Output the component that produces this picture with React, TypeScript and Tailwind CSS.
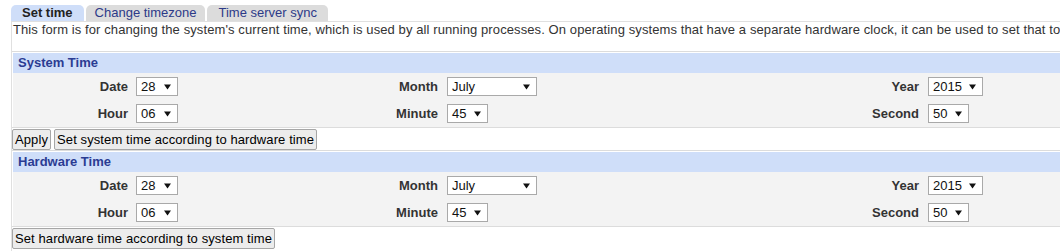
import React from "react";

const Arrow = () => (
  <svg width="7" height="6" viewBox="0 0 7 6" className="shrink-0">
    <path d="M0 0.5 L7 0.5 L3.5 5.5 Z" fill="#111" />
  </svg>
);

const Sel = ({ value, w }: { value: string; w: string }) => (
  <div
    className={`ml-[4px] flex h-[19px] items-center justify-between border border-[#a9a9a9] bg-white pl-[4px] pr-[6px] text-[13px] leading-[17px] text-[#111] ${w}`}
  >
    <span>{value}</span>
    <Arrow />
  </div>
);

const Label = ({ text, pr }: { text: string; pr: string }) => (
  <div className={`flex h-[19px] items-center justify-end text-[13px] font-bold text-[#333] ${pr}`}>{text}</div>
);

const Btn = ({ children }: { children: React.ReactNode }) => (
  <button className="h-[21px] rounded-[2px] border border-[#a6a6a6] bg-[#ececec] px-[2px] text-[13px] leading-[19px] tracking-[0.1px] text-black">
    {children}
  </button>
);

const Section = ({ title }: { title: string }) => (
  <div className="border-b border-t border-[#dcdcdc] pl-px pt-px">
    <div className="h-[20px] bg-[#cfdef9] pl-[5px] text-[13px] font-bold leading-[20px] text-[#2b3c93]">{title}</div>
    <div className="grid h-[54px] grid-cols-[119px_254px_57px_424px_57px_200px] content-start gap-y-[8px] bg-[#f3f3f3] pt-[4px]">
      <Label text="Date" pr="pr-[4px]" />
      <div className="flex"><Sel value="28" w="w-[42px]" /></div>
      <Label text="Month" pr="pr-[5px]" />
      <div className="flex"><Sel value="July" w="w-[90px]" /></div>
      <Label text="Year" pr="pr-[5px]" />
      <div className="flex"><Sel value="2015" w="w-[55px]" /></div>
      <Label text="Hour" pr="pr-[4px]" />
      <div className="flex"><Sel value="06" w="w-[42px]" /></div>
      <Label text="Minute" pr="pr-[5px]" />
      <div className="flex"><Sel value="45" w="w-[41px]" /></div>
      <Label text="Second" pr="pr-[5px]" />
      <div className="flex"><Sel value="50" w="w-[41px]" /></div>
    </div>
  </div>
);

export default function App() {
  return (
    <div
      className="h-[251px] w-[1060px] overflow-hidden bg-white text-[13px] text-[#333]"
      style={{ fontFamily: '"Liberation Sans", Arial, sans-serif' }}
    >
      <div className="w-[1300px]">
        <div className="flex gap-[2px] pl-[11px] pt-[5px]">
          <div className="h-[16px] rounded-t-[5px] bg-[#cfdef9] px-[11px] text-[13px] font-bold leading-[16px] text-[#222]">Set time</div>
          <div className="h-[16px] rounded-t-[5px] bg-[#dcdcdc] px-[9px] text-[13px] leading-[16px] text-[#2c3a88]">Change timezone</div>
          <div className="h-[16px] rounded-t-[5px] bg-[#dcdcdc] px-[11px] text-[13px] leading-[16px] text-[#2c3a88]">Time server sync</div>
        </div>
        <div className="ml-[11px] border-l border-t border-[#e0e0e0] pb-[3px]">
          <div className="h-[16px] whitespace-nowrap pl-px text-[13px] leading-[16px] tracking-[0.1px] text-[#333]">
            This form is for changing the system's current time, which is used by all running processes. On operating systems that have a separate hardware clock, it can be used to set that too.
          </div>
          <div className="mt-[13px]">
            <Section title="System Time" />
            <div className="flex h-[22px] items-start gap-[3px] pt-px">
              <Btn>Apply</Btn>
              <Btn>Set system time according to hardware time</Btn>
            </div>
            <Section title="Hardware Time" />
            <div className="flex h-[22px] items-start gap-[3px] pt-px">
              <Btn>Set hardware time according to system time</Btn>
            </div>
          </div>
        </div>
      </div>
    </div>
  );
}
